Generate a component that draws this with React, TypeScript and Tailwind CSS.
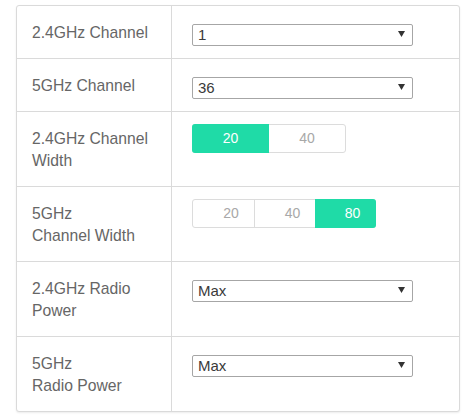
import { ReactNode } from "react";

type Row = {
  label: ReactNode;
  kind: "select" | "width";
  value?: string;
  options?: string[];
  widths?: string[];
  active?: string;
  wide?: boolean;
};

const rows: Row[] = [
  { label: "2.4GHz Channel", kind: "select", value: "1", options: ["1", "6", "11"] },
  { label: "5GHz Channel", kind: "select", value: "36", options: ["36", "40", "44", "48"] },
  {
    label: (
      <>
        2.4GHz Channel
        <br />
        Width
      </>
    ),
    kind: "width",
    widths: ["20", "40"],
    active: "20",
    wide: true,
  },
  {
    label: (
      <>
        5GHz
        <br />
        Channel Width
      </>
    ),
    kind: "width",
    widths: ["20", "40", "80"],
    active: "80",
  },
  {
    label: (
      <>
        2.4GHz Radio
        <br />
        Power
      </>
    ),
    kind: "select",
    value: "Max",
    options: ["Max", "High", "Medium", "Low"],
  },
  {
    label: (
      <>
        5GHz
        <br />
        Radio Power
      </>
    ),
    kind: "select",
    value: "Max",
    options: ["Max", "High", "Medium", "Low"],
  },
];

function Dropdown({ value, options }: { value: string; options: string[] }) {
  return (
    <div className="relative w-[221px] h-[22px]">
      <select
        defaultValue={value}
        className="appearance-none w-full h-full border border-[#a6a6a6] rounded-[2px] bg-white pl-[5px] text-[15px] font-normal leading-[20px] text-[#3a3a3a] outline-none"
      >
        {options.map((o) => (
          <option key={o} value={o}>
            {o}
          </option>
        ))}
      </select>
      <svg
        className="absolute right-[8px] top-[8px] pointer-events-none"
        width="7"
        height="6"
        viewBox="0 0 7 6"
      >
        <path d="M0 0h7L3.5 6z" fill="#333" />
      </svg>
    </div>
  );
}

function WidthToggle({ widths, active, wide }: { widths: string[]; active: string; wide?: boolean }) {
  return (
    <div className="flex h-[29px] border border-[#dcdcdc] rounded-[3px] w-fit">
      {widths.map((w, i) => {
        const on = w === active;
        const first = i === 0;
        const last = i === widths.length - 1;
        return (
          <button
            key={w}
            className={`flex items-center justify-center text-[14px] ${
              wide ? "w-[76px]" : last ? "w-[61px] pl-[14px]" : "w-[61px] pl-[15px]"
            } ${on ? "bg-[#1fdba7] text-white -my-px h-[29px]" : "text-[#a8a8a8]"} ${
              on && first ? "-ml-px rounded-l-[3px] w-[77px]" : ""
            } ${on && last ? "-mr-px rounded-r-[3px]" : ""} ${
              !first && !on && !wide ? "border-l border-[#dcdcdc]" : ""
            }`}
          >
            {w}
          </button>
        );
      })}
    </div>
  );
}

export default function App() {
  return (
    <div className="min-h-screen bg-white pt-[5px] pl-4" style={{ fontFamily: '"Liberation Sans", Arial, sans-serif' }}>
      <div className="w-[444px] border border-[#dadada] rounded-[3px] shadow-[0_1px_2px_rgba(0,0,0,0.08)] bg-white">
        {rows.map((row, i) => (
          <div key={i} className={`flex ${i > 0 ? "border-t border-[#dadada]" : ""}`}>
            <div className="w-[155px] shrink-0 border-r border-[#dadada] pl-[15px] pt-[16px] pb-[14px] text-[15.7px] leading-[22px] text-[#666]">
              {row.label}
            </div>
            <div className={`pl-5 ${row.kind === "select" ? "pt-[17px]" : "pt-3"}`}>
              {row.kind === "select" ? (
                <Dropdown value={row.value!} options={row.options!} />
              ) : (
                <WidthToggle widths={row.widths!} active={row.active!} wide={row.wide} />
              )}
            </div>
          </div>
        ))}
      </div>
    </div>
  );
}
